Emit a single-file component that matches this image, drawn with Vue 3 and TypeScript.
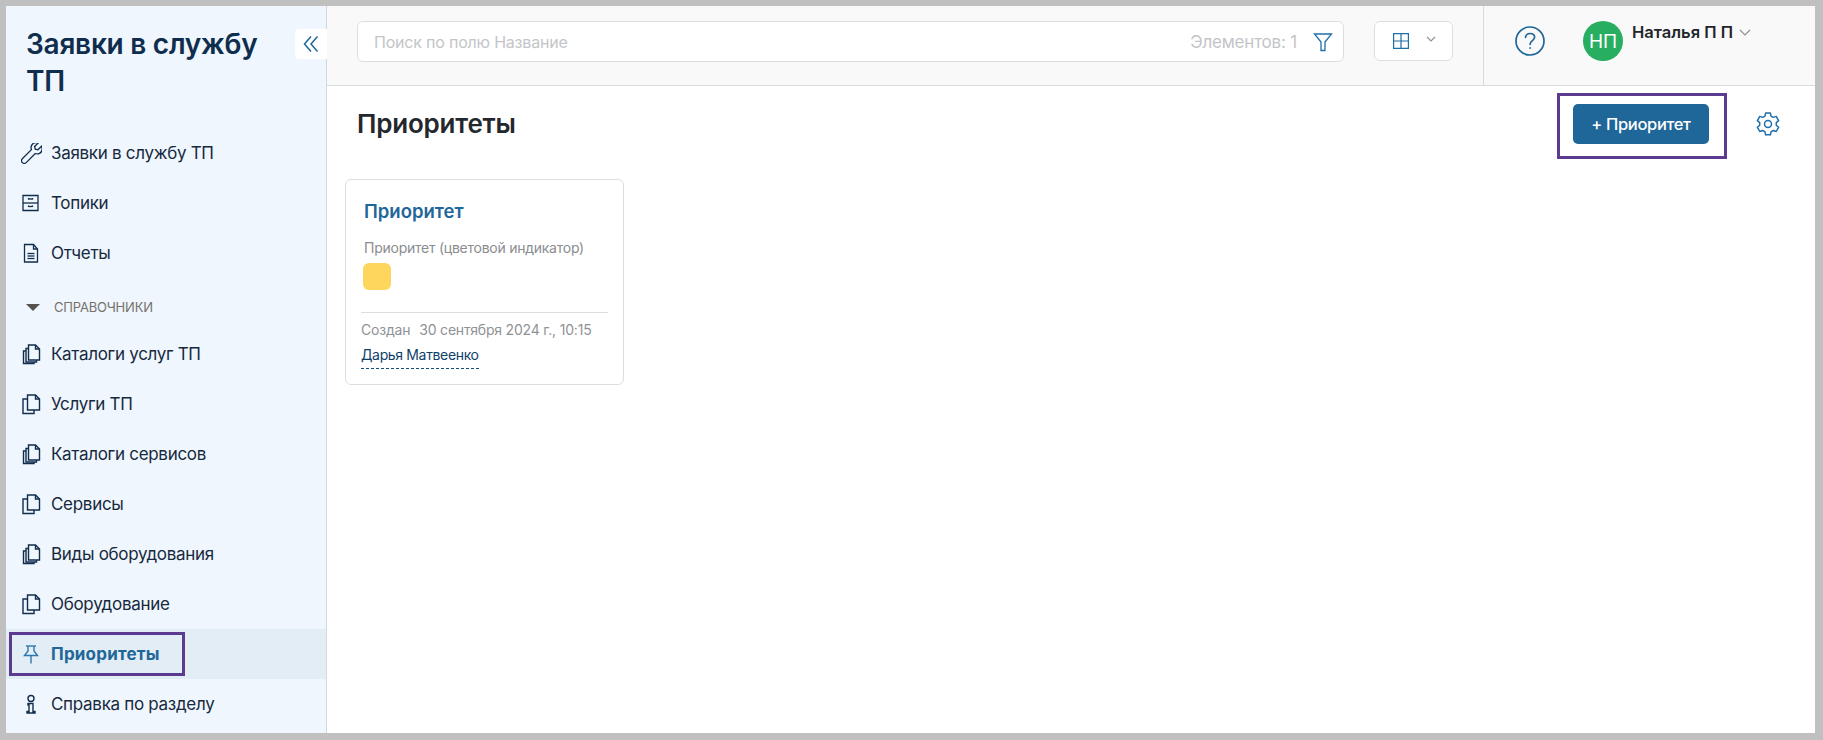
<script setup lang="ts">
interface NavItem { label: string; icon: string; active?: boolean }
const topItems: NavItem[] = [
  { label: 'Заявки в службу ТП', icon: 'wrench' },
  { label: 'Топики', icon: 'cabinet' },
  { label: 'Отчеты', icon: 'doc' },
]
const refItems: NavItem[] = [
  { label: 'Каталоги услуг ТП', icon: 'stack' },
  { label: 'Услуги ТП', icon: 'copy' },
  { label: 'Каталоги сервисов', icon: 'stack' },
  { label: 'Сервисы', icon: 'copy' },
  { label: 'Виды оборудования', icon: 'stack' },
  { label: 'Оборудование', icon: 'copy' },
  { label: 'Приоритеты', icon: 'pin', active: true },
  { label: 'Справка по разделу', icon: 'info' },
]
const iconPaths: Record<string, string[]> = {
  wrench: ['M20.5 3.2l-3.6 3.6-2.6-.7-.7-2.6L17.2 0c-2.6-.8-5.5.1-6.6 2.4-.7 1.400-.7 2.900-.2 4.200L1.300 15.700c-1.100 1.100-1.100 2.800 0 3.900s2.800 1.100 3.900 0l9.100-9.100c1.300.5 2.800.5 4.200-.2 2.300-1.100 3.200-4 2-7.100z'],
  cabinet: ['M2 2.500h15v15H2z', 'M2 10h15', 'M7.500 6h4', 'M7.500 13.500h4', 'M7.500 5v1.500', 'M11.500 5v1.500', 'M7.500 12.500V14', 'M11.500 12.500V14'],
  doc: ['M3.500 1.500h9l4 4.500v13h-13z', 'M12.500 1.500V6h4', 'M6.500 10.500h7', 'M6.500 13h7', 'M6.500 15.500h7'],
  copy: ['M6.500 1h8l4 4v11h-12z', 'M14.500 1v4h4', 'M6.500 5H2v14.500h11V16'],
  stack: ['M7.500 1h7l4 4v11h-11z', 'M14.500 1v4h4', 'M7.500 4.500H5v13.500h10.500v-2', 'M5 7H2.500v12.500h10.500V18'],
  pin: ['M5 2h10', 'M7 2v5L3.500 11.500h13L13 7V2', 'M10 11.500v8'],
  info: ['M10 1.500a3 3 0 1 1 0 6 3 3 0 0 1 0-6z', 'M7 9.500h5v8h2v1.500H6v-1.500h2v-6.500H7z'],
}
</script>

<template>
  <div class="frame">
    <aside class="sidebar">
      <div class="brand">
        <h1 class="brand-title">Заявки в службу ТП</h1>
        <button class="collapse" aria-label="Свернуть">
          <svg width="16" height="18" viewBox="0 0 16 18" fill="none" stroke="#1f6699" stroke-width="1.500"><path d="M8 1.500L1.500 9 8 16.500" /><path d="M14.500 1.500L8 9l6.500 7.500" /></svg>
        </button>
      </div>
      <nav class="nav">
        <a v-for="item in topItems" :key="item.label" class="nav-item">
          <svg class="nav-icon" viewBox="0 0 21 21" fill="none" stroke="#0f2d4d" stroke-width="1.300"><path v-for="d in iconPaths[item.icon]" :key="d" :d="d" /></svg>
          <span>{{ item.label }}</span>
        </a>
        <div class="section">
          <span class="caret"></span>
          <span>СПРАВОЧНИКИ</span>
        </div>
        <a v-for="item in refItems" :key="item.label" class="nav-item" :class="{ active: item.active }">
          <svg class="nav-icon" viewBox="0 0 21 21" fill="none" :stroke="item.active ? '#2f78ad' : '#0f2d4d'" stroke-width="1.400"><path v-for="d in iconPaths[item.icon]" :key="d" :d="d" /></svg>
          <span>{{ item.label }}</span>
          <i v-if="item.active" class="mark mark-nav"></i>
        </a>
      </nav>
    </aside>

    <main class="main">
      <header class="topbar">
        <div class="search">
          <span class="placeholder">Поиск по полю Название</span>
          <span class="count">Элементов: 1</span>
          <svg width="20" height="20" viewBox="0 0 20 20" fill="none" stroke="#1f6fa8" stroke-width="1.300"><path d="M1.500 2h17l-6.500 8v8.500h-4V10z" /></svg>
        </div>
        <button class="view">
          <svg width="16" height="16" viewBox="0 0 16 16" fill="none" stroke="#1f6fa8" stroke-width="1.200"><path d="M.6.600h14.800v14.800H.6z" /><path d="M8 .6v14.800M.6 8h14.800" /></svg>
          <svg class="view-chev" width="10" height="6" viewBox="0 0 10 6" fill="none" stroke="#8a8f95" stroke-width="1.100"><path d="M1 1l4 4 4-4" /></svg>
        </button>
        <div class="user-area">
          <svg class="help" width="30" height="30" viewBox="0 0 30 30" fill="none" stroke="#1f6699" stroke-width="1.700"><circle cx="15" cy="15" r="14" /><path d="M10.500 11.500c.3-2.500 2.200-4 4.600-4 2.600 0 4.500 1.600 4.500 3.800 0 3.400-4.500 3.400-4.500 7" stroke-linecap="round" /><circle cx="15.100" cy="22" r=".9" fill="#1f6699" stroke="none" /></svg>
          <div class="avatar">НП</div>
          <div class="username">Наталья П П</div>
          <svg class="user-chev" width="12" height="7" viewBox="0 0 12 7" fill="none" stroke="#8a8f95" stroke-width="1.100"><path d="M1 1l5 5 5-5" /></svg>
        </div>
      </header>

      <section class="content">
        <div class="page-head">
          <h2 class="page-title">Приоритеты</h2>
          <div class="actions">
            <div class="btn-wrap">
              <button class="primary">+ Приоритет</button>
              <i class="mark mark-btn"></i>
            </div>
            <svg width="24" height="24" viewBox="0 0 24 24" fill="none" stroke="#1f6fa8" stroke-width="1.500" stroke-linejoin="round"><path d="M9.600 2h4.800l.6 3 2.300 1.300 2.900-1 2.400 4.200-2.300 2v2.700l2.300 2-2.400 4.200-2.900-1L15 20.700l-.6 3H9.600l-.6-3-2.300-1.300-2.900 1-2.400-4.200 2.300-2v-2.700l-2.300-2 2.400-4.200 2.900 1L9 5z" transform="translate(0 -.9)" /><circle cx="12" cy="12" r="3.500" /></svg>
          </div>
        </div>

        <article class="card">
          <div class="card-title">Приоритет</div>
          <div class="card-label">Приоритет (цветовой индикатор)</div>
          <div class="swatch"></div>
          <div class="card-foot">
            <div class="created"><span>Создан</span><span>30 сентября 2024 г., 10:15</span></div>
            <span class="author">Дарья Матвеенко</span>
          </div>
        </article>
      </section>
    </main>
  </div>
</template>

<style>
html, body { margin: 0; background: #c0c0c0; }
</style>

<style scoped>
* { box-sizing: border-box; }
.frame {
  width: 1823px; height: 740px;
  padding: 6px 8px 7px 6px;
  display: flex;
  background: #c0c0c0;
  font-family: Inter, "Noto Sans", sans-serif;
  overflow: hidden;
}
.sidebar {
  width: 321px; flex: none;
  background: #f0f6fd;
  border-right: 1px solid #d4d8dc;
  display: flex; flex-direction: column;
}
.brand { position: relative; padding: 20px 60px 0 20px; height: 122px; }
.brand-title {
  margin: 0;
  font-size: 28px; line-height: 37px; font-weight: 600;
  letter-spacing: -0.25px;
  color: #0f2d4d;
}
.collapse {
  position: absolute; right: -1px; top: 23px;
  width: 32px; height: 30px;
  display: flex; align-items: center; justify-content: center;
  border: 0; padding: 0;
  background: #fff;
  border-radius: 4px 0 0 4px;
}
.nav { display: flex; flex-direction: column; }
.nav-item {
  position: relative;
  height: 50px;
  padding-left: 15px;
  display: flex; align-items: center; gap: 9px;
  font-size: 17px; letter-spacing: -0.3px; color: #16293d;
}
.nav-icon { width: 21px; height: 21px; flex: none; }
.nav-item.active { background: #e2edf6; color: #1f6699; font-weight: 700; letter-spacing: 0.2px; }
.section {
  height: 51px;
  padding: 7px 0 0 20px;
  display: flex; align-items: center; gap: 14px;
  font-size: 13px; letter-spacing: -0.2px; color: #75716d;
}
.caret {
  width: 0; height: 0;
  border-left: 7px solid transparent;
  border-right: 7px solid transparent;
  border-top: 7px solid #55514e;
}
.mark { position: absolute; border: 3px solid #5b3a8f; pointer-events: none; }
.mark-nav { left: 3px; top: 3px; width: 176px; height: 44px; }
.main { flex: 1; display: flex; flex-direction: column; min-width: 0; background: #fff; }
.topbar {
  height: 80px; flex: none;
  background: #f9f9f9;
  border-bottom: 1px solid #d9dcdf;
  display: flex; align-items: flex-start;
  padding: 15px 0 0 30px;
}
.search {
  width: 987px; height: 41px;
  background: #fff;
  border: 1px solid #dcdfe2;
  border-radius: 6px;
  display: flex; align-items: center;
  padding: 0 10px 0 16px;
  font-size: 16px; letter-spacing: -0.2px; color: #c3c5c8;
}
.placeholder { flex: 1; }
.count { margin-right: 16px; font-size: 17px; letter-spacing: -0.2px; }
.view {
  margin-left: 30px;
  width: 79px; height: 40px;
  background: #fff;
  border: 1px solid #dcdfe2;
  border-radius: 6px;
  display: flex; align-items: center;
  padding: 0 0 0 18px;
}
.view-chev { margin: -4px 0 0 17px; }
.user-area {
  margin-left: 30px;
  height: 79px; margin-top: -15px;
  flex: 1;
  border-left: 1px solid #d9dcdf;
  display: flex; align-items: flex-start;
  padding: 20px 0 0 31px;
  position: relative;
}
.avatar {
  margin-left: 38px; margin-top: -5px;
  width: 40px; height: 40px; border-radius: 50%;
  background: #27ae60; color: #fff;
  display: flex; align-items: center; justify-content: center;
  font-size: 19px;
}
.username {
  margin: -3px 0 0 9px;
  font-size: 16.5px; line-height: 18px; font-weight: 600; color: #22262b;
  white-space: nowrap;
}
.user-chev { margin: 3px 0 0 6px; }
.content { flex: 1; padding: 0 0 0 18px; }
.page-head {
  height: 93px; padding: 7px 0 0 12px;
  display: flex; justify-content: space-between;
}
.page-title {
  margin: 0; height: 62px;
  font-size: 26px; line-height: 62px; font-weight: 600; letter-spacing: -0.2px; color: #24272c;
}
.actions { display: flex; align-items: center; height: 62px; }
.btn-wrap { position: relative; padding: 0 15px 0 16px; }
.primary {
  display: block;
  width: 136px; height: 40px;
  background: #1f6699; color: #fff;
  border: 0; border-radius: 5px;
  font: 500 16.5px Inter, "Noto Sans", sans-serif;
  letter-spacing: -0.35px;
}
.mark-btn { left: 0; top: -11px; width: 170px; height: 66px; }
.actions svg { margin: 0 35px 0 32px; }
.card {
  width: 279px; height: 206px;
  border: 1px solid #dcdfe2; border-radius: 6px;
  padding: 18px 15px 0 15px;
  background: #fff;
}
.card-title {
  padding-left: 3px;
  font-size: 18.5px; line-height: 26px; font-weight: 600; color: #1f6699;
}
.card-label {
  margin-top: 14px; padding-left: 3px;
  font-size: 14px; line-height: 20px; letter-spacing: -0.25px; color: #8a8d90;
}
.swatch {
  margin: 5px 0 0 2px;
  width: 28px; height: 27px; border-radius: 6px;
  background: #ffd65c;
}
.card-foot {
  margin-top: 22px;
  border-top: 1px solid #dcdfe2;
  padding-top: 7px;
}
.created {
  display: flex; gap: 9px;
  font-size: 14px; line-height: 20px; letter-spacing: -0.2px; color: #8f9295;
}
.author {
  display: inline-block;
  margin-top: 5px;
  padding-bottom: 3px;
  font-size: 14px; line-height: 20px; letter-spacing: -0.35px; color: #0f3f6b;
  border-bottom: 1px dashed #0f4f80;
}
</style>
